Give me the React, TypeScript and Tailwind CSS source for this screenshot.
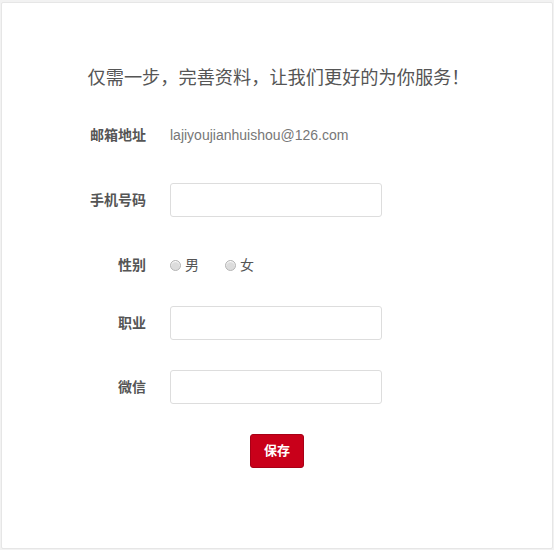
import React from "react";

const FONT = "font-['Liberation_Sans','Noto_Sans_CJK_SC',sans-serif]";

function Label({ text }: { text: string }) {
  return <div className="w-[144px] shrink-0 text-right text-[14px] font-bold text-[#555]">{text}</div>;
}

function Radio({ label }: { label: string }) {
  return (
    <label className="flex items-center gap-[4px] text-[14px] text-[#555]">
      <span className="w-[11px] h-[11px] rounded-full border border-[#b5b5b5] bg-[#dcdcdc] shadow-[inset_0_1px_1px_#fff]" />
      <span>{label}</span>
    </label>
  );
}

export default function App() {
  return (
    <div className={`w-[554px] h-[550px] bg-[#f2f2f2] pt-[2px] pl-[1px] pr-[1px] pb-[1px] ${FONT}`}>
      <div className="h-full bg-white border border-[#e6e6e6] rounded-[2px]">
        <h1 className="pt-[61px] text-center text-[18.2px] text-[#555] leading-[28px] pl-[3px]">仅需一步，完善资料，让我们更好的为你服务！</h1>

        <div className="mt-[26px] flex items-center h-[34px]">
          <Label text="邮箱地址" />
          <div className="ml-[24px] text-[14px] text-[#777]">lajiyoujianhuishou@126.com</div>
        </div>

        <div className="mt-[31px] flex items-center h-[34px]">
          <Label text="手机号码" />
          <input className="ml-[24px] w-[212px] h-[34px] rounded-[3px] border border-[#ddd] outline-none px-2 text-[14px]" />
        </div>

        <div className="mt-[31px] flex items-center h-[34px]">
          <Label text="性别" />
          <div className="ml-[24px] flex items-center gap-[26px]">
            <Radio label="男" />
            <Radio label="女" />
          </div>
        </div>

        <div className="mt-[24px] flex items-center h-[34px]">
          <Label text="职业" />
          <input className="ml-[24px] w-[212px] h-[34px] rounded-[3px] border border-[#ddd] outline-none px-2 text-[14px]" />
        </div>

        <div className="mt-[30px] flex items-center h-[34px]">
          <Label text="微信" />
          <input className="ml-[24px] w-[212px] h-[34px] rounded-[3px] border border-[#ddd] outline-none px-2 text-[14px]" />
        </div>

        <div className="mt-[30px] flex justify-center">
          <button className="w-[54px] h-[34px] rounded-[3px] bg-[#c9001a] border border-[#a80016] text-white text-[13px] font-bold">保存</button>
        </div>
      </div>
    </div>
  );
}
